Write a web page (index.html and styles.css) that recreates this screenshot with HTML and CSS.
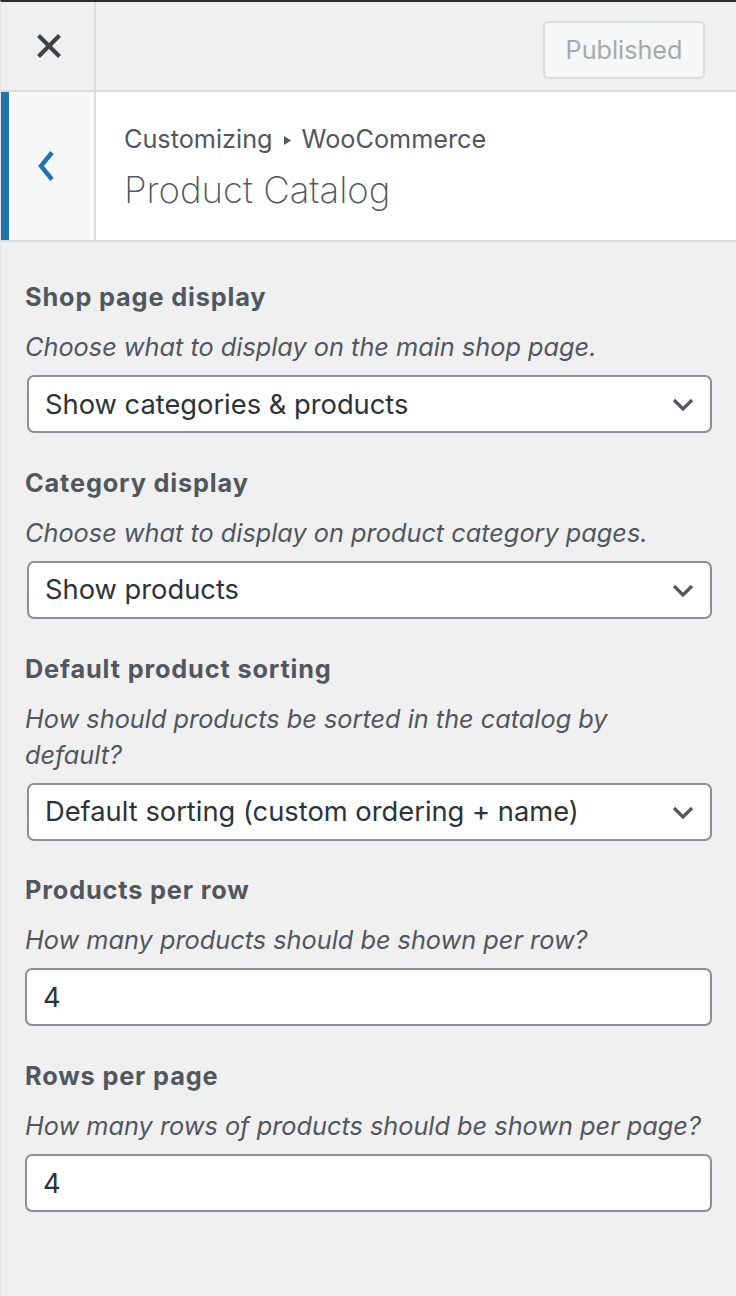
FILE: index.html
```html
<!DOCTYPE html>
<html lang="en">
<head>
<meta charset="utf-8">
<title>Product Catalog</title>
<link rel="stylesheet" href="styles.css">
</head>
<body>
<div class="panel">
  <header class="topbar">
    <button class="close-btn" aria-label="Close">
      <svg width="24" height="24" viewBox="0 0 24 24"><path d="M3 3 L21 21 M21 3 L3 21" stroke="#3c434a" stroke-width="4.2" stroke-linecap="square" fill="none"/></svg>
    </button>
    <div class="topbar-actions">
      <button class="published-btn" disabled>Published</button>
    </div>
  </header>
  <section class="section-head">
    <button class="back-btn" aria-label="Back">
      <svg width="20" height="32" viewBox="0 0 20 32"><path d="M16 2.5 L5 16 L16 29.5" stroke="#2271b1" stroke-width="4.4" fill="none"/></svg>
    </button>
    <div class="section-title">
      <div class="crumb">Customizing<svg class="crumb-arrow" width="7" height="9" viewBox="0 0 7 9"><path d="M0 0 L7 4.5 L0 9 Z" fill="#50575e"/></svg>WooCommerce</div>
      <h1 class="title">Product Catalog</h1>
    </div>
  </section>
  <main class="controls">
    <div class="control">
      <label class="control-title">Shop page display</label>
      <p class="description">Choose what to display on the main shop page.</p>
      <div class="select">
        <span class="select-value">Show categories &amp; products</span>
        <svg class="chev" width="22" height="14" viewBox="0 0 22 14"><path d="M2 2 L11 11 L20 2" stroke="#50575e" stroke-width="3.2" fill="none"/></svg>
      </div>
    </div>
    <div class="control">
      <label class="control-title">Category display</label>
      <p class="description">Choose what to display on product category pages.</p>
      <div class="select">
        <span class="select-value">Show products</span>
        <svg class="chev" width="22" height="14" viewBox="0 0 22 14"><path d="M2 2 L11 11 L20 2" stroke="#50575e" stroke-width="3.2" fill="none"/></svg>
      </div>
    </div>
    <div class="control">
      <label class="control-title">Default product sorting</label>
      <p class="description">How should products be sorted in the catalog by default?</p>
      <div class="select">
        <span class="select-value">Default sorting (custom ordering + name)</span>
        <svg class="chev" width="22" height="14" viewBox="0 0 22 14"><path d="M2 2 L11 11 L20 2" stroke="#50575e" stroke-width="3.2" fill="none"/></svg>
      </div>
    </div>
    <div class="control">
      <label class="control-title">Products per row</label>
      <p class="description">How many products should be shown per row?</p>
      <div class="text-input">4</div>
    </div>
    <div class="control">
      <label class="control-title">Rows per page</label>
      <p class="description">How many rows of products should be shown per page?</p>
      <div class="text-input">4</div>
    </div>
  </main>
</div>
</body>
</html>
```
FILE: styles.css
```css
* { box-sizing: border-box; }
html, body { margin: 0; padding: 0; }
body {
  width: 736px;
  height: 1296px;
  background: #f0f0f1;
  font-family: Inter, "Noto Sans", "Liberation Sans", sans-serif;
  color: #50575e;
  overflow: hidden;
}
.panel {
  min-height: 1296px;
  border-top: 2px solid #2c2c2c;
  border-left: 1px solid #e4e4e4;
  background: #f0f0f1;
}
.topbar {
  display: flex;
  height: 90px;
  border-bottom: 2px solid #dcdcde;
}
.close-btn {
  width: 95px;
  height: 88px;
  border: 0;
  border-right: 2px solid #dcdcde;
  background: #f0f0f1;
  display: flex;
  align-items: center;
  justify-content: center;
  padding: 0 0 0 2px;
}
.topbar-actions {
  flex: 1;
  display: flex;
  justify-content: flex-end;
  align-items: flex-start;
  padding: 19px 31px 0 0;
}
.published-btn {
  width: 162px;
  height: 58px;
  border: 2px solid #dcdcde;
  border-radius: 5px;
  background: #f6f7f7;
  color: #a7aaad;
  font-family: inherit;
  font-size: 25.2px;
  padding: 0;
}
.section-head {
  display: flex;
  background: #fff;
  border-bottom: 2px solid #dcdcde;
  height: 150px;
}
.back-btn {
  width: 95px;
  border: 0;
  border-left: 8px solid #2271b1;
  border-right: 2px solid #dcdcde;
  background: #f6f7f7;
  display: flex;
  align-items: center;
  justify-content: center;
  padding: 0 12px 0 0;
}
.section-title {
  padding: 29px 0 0 28px;
}
.crumb {
  font-size: 25.25px;
  line-height: 36px;
  color: #50575e;
  display: flex;
  align-items: center;
}
.crumb-arrow {
  margin: 2px 11px 0 11px;
}
.title {
  margin: 8px 0 0 0;
  font-size: 36.6px;
  line-height: 50px;
  font-weight: 250;
  color: #50575e;
}
.controls {
  padding: 34px 24px 0 24px;
  display: flex;
  flex-direction: column;
  gap: 28.75px;
}
.control {
  display: flex;
  flex-direction: column;
}
.control-title {
  font-size: 25.3px;
  line-height: 42px;
  font-weight: 700;
  letter-spacing: 0.85px;
  color: #50575e;
}
.description {
  margin: 11px 0 10px 0;
  padding-right: 6px;
  font-size: 25.3px;
  line-height: 36px;
  font-style: italic;
  color: #50575e;
}
.select {
  margin-left: 2px;
  height: 58px;
  border: 2px solid #8c8f94;
  border-radius: 7px;
  background: #fff;
  display: flex;
  align-items: center;
  justify-content: space-between;
  padding: 0 16px 0 16px;
}
.select-value, .text-input {
  font-size: 27.3px;
  color: #2c3338;
}
.chev { margin-top: 2px; }
.text-input {
  width: 687px;
  height: 58px;
  border: 2px solid #8c8f94;
  border-radius: 7px;
  background: #fff;
  display: flex;
  align-items: center;
  padding: 0 16px;
}
```
